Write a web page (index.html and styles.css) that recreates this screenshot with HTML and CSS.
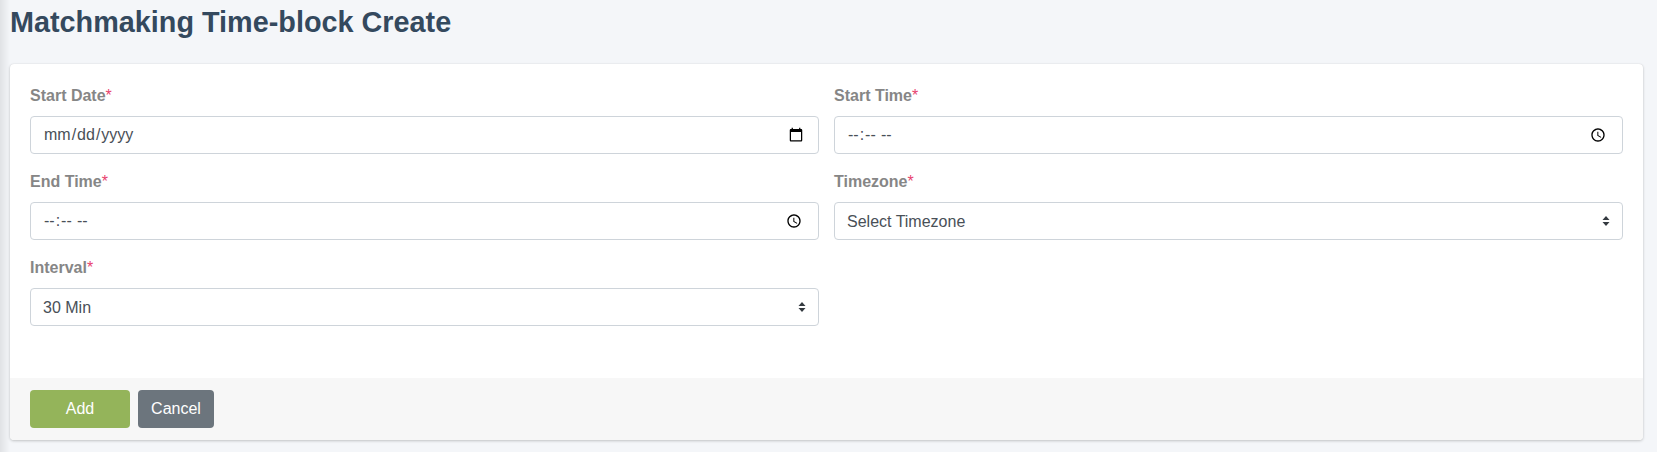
FILE: index.html
```html
<!DOCTYPE html>
<html lang="en">
<head>
    <meta charset="UTF-8">
    <meta name="viewport" content="width=device-width, initial-scale=1.0">
    <title>Matchmaking Time-block Create</title>
    <link rel="stylesheet" href="styles.css">
</head>
<body>
    <div class="page">
        <h1 class="page-title">Matchmaking Time-block Create</h1>
        <form class="card">
            <div class="card-body">
                <div class="form-grid">
                    <div class="form-group">
                        <label class="form-label">Start Date<span class="req">*</span></label>
                        <input class="form-control" type="date">
                    </div>
                    <div class="form-group">
                        <label class="form-label">Start Time<span class="req">*</span></label>
                        <input class="form-control" type="time">
                    </div>
                    <div class="form-group">
                        <label class="form-label">End Time<span class="req">*</span></label>
                        <input class="form-control" type="time">
                    </div>
                    <div class="form-group">
                        <label class="form-label">Timezone<span class="req">*</span></label>
                        <select class="form-control form-select">
                            <option>Select Timezone</option>
                        </select>
                    </div>
                    <div class="form-group">
                        <label class="form-label">Interval<span class="req">*</span></label>
                        <select class="form-control form-select">
                            <option>30 Min</option>
                        </select>
                    </div>
                </div>
            </div>
            <div class="card-footer">
                <button type="button" class="btn btn-add">Add</button>
                <button type="button" class="btn btn-cancel">Cancel</button>
            </div>
        </form>
    </div>
</body>
</html>
```

FILE: styles.css
```css
*{
    box-sizing: border-box;
}
html,body{
    height: 100%;
}
body{
    margin: 0;
    background-color: #f4f6f9;
    font-family: "Liberation Sans", Arial, sans-serif;
    font-size: 16px;
    color: #495057;
    overflow: hidden;
}
.page{
    height: 100%;
    padding: 0 14px 0 10px;
    background-image: linear-gradient(to right, #e0e2e5, #f4f6f9 10px);
}
.page-title{
    margin: 0;
    padding-top: 6px;
    height: 64px;
    font-size: 28.8px;
    line-height: 33px;
    font-weight: 700;
    color: #34495e;
}
.card{
    height: 376px;
    display: flex;
    flex-direction: column;
    background-color: #fff;
    border-radius: 4px;
    box-shadow: 0 0 1px rgba(0,0,0,.125), 0 1px 3px rgba(0,0,0,.2);
}
.card-body{
    flex: 1;
    padding: 20px 20px 0;
}
.form-grid{
    display: grid;
    grid-template-columns: 789px 789px;
    column-gap: 15px;
    row-gap: 16px;
}
.form-label{
    display: block;
    height: 24px;
    margin-bottom: 8px;
    font-size: 16px;
    line-height: 24px;
    font-weight: 700;
    color: #868686;
}
.req{
    color: #e8436e;
    font-weight: 400;
}
.form-control{
    display: block;
    width: 100%;
    height: 38px;
    padding: 6px 12px;
    border: 1px solid #ced4da;
    border-radius: 4px;
    background-color: #fff;
    font-family: inherit;
    font-size: 16px;
    color: #495057;
}
.form-select{
    appearance: none;
    background-image: url("data:image/svg+xml,%3csvg xmlns='http://www.w3.org/2000/svg' width='8' height='10' viewBox='0 0 8 10'%3e%3cpath fill='%23343a40' d='M4 0 7.5 4H.5zM4 10 .5 6h7z'/%3e%3c/svg%3e");
    background-repeat: no-repeat;
    background-position: right 12px center;
    background-size: 8px 10px;
}
.card-footer{
    height: 62px;
    padding: 12px 20px;
    display: flex;
    gap: 8px;
    background-color: #f7f7f7;
    border-radius: 0 0 4px 4px;
}
.btn{
    height: 38px;
    border: 1px solid transparent;
    border-radius: 4px;
    font-family: inherit;
    font-size: 16px;
    color: #fff;
}
.btn-add{
    width: 100px;
    background-color: #94b45a;
}
.btn-cancel{
    width: 76px;
    background-color: #6c757d;
}
```
